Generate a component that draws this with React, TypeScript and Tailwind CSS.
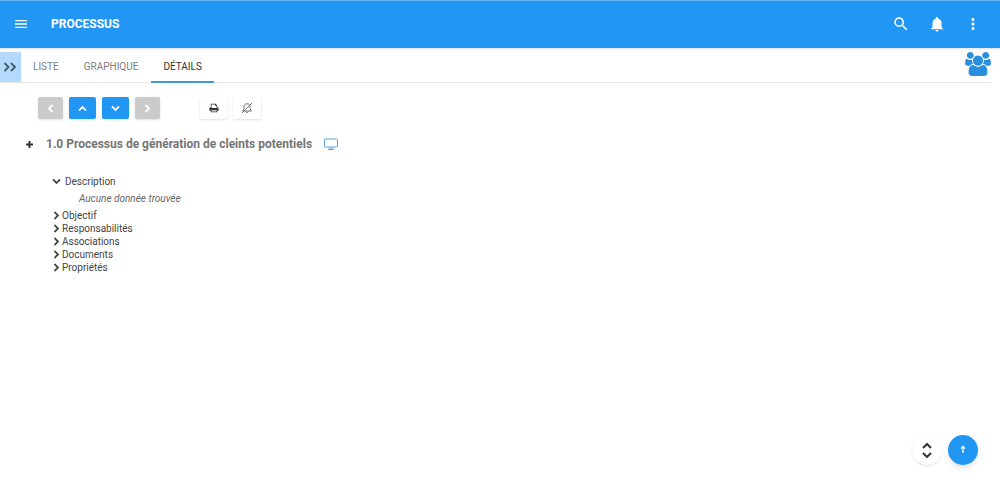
import { useState, type ReactNode } from 'react'
import { MdMenu, MdMoreVert, MdNotifications, MdSearch } from 'react-icons/md'

const tabs = ['LISTE', 'GRAPHIQUE', 'DÉTAILS']

const sections = ['Objectif', 'Responsabilités', 'Associations', 'Documents', 'Propriétés']

function Chevron({ className }: { className?: string }) {
  return (
    <svg viewBox="0 0 1792 1792" fill="currentColor" className={className} aria-hidden="true">
      <path d="M1395 941l-742 742q-19 19-45 19t-45-19l-166-166q-19-19-19-45t19-45l531-531-531-531q-19-19-19-45t19-45l166-166q19-19 45-19t45 19l742 742q19 19 19 45t-19 45z" />
    </svg>
  )
}

function UsersIcon() {
  return (
    <svg viewBox="0 0 1920 1792" fill="currentColor" className="h-6 w-[26px]" aria-hidden="true">
      <path d="M593 896q-162 5-265 128h-134q-82 0-138-40.5t-56-118.5q0-353 124-353 6 0 43.5 21t97.5 42.5 119 21.5q67 0 133-23-5 37-5 66 0 139 81 256zm1071 637q0 120-73 189.5t-194 69.5h-874q-121 0-194-69.5t-73-189.5q0-53 3.5-103.5t14-109 26.5-108.5 43-97.5 62-81 85.5-53.5 111.5-20q10 0 43 21.5t73 48 107 48 135 21.5 135-21.5 107-48 73-48 43-21.5q61 0 111.5 20t85.5 53.5 62 81 43 97.5 26.5 108.5 14 109 3.5 103.5zm-1024-1277q0 106-75 181t-181 75-181-75-75-181 75-181 181-75 181 75 75 181zm704 384q0 159-112.5 271.5t-271.5 112.5-271.5-112.5-112.5-271.5 112.5-271.5 271.5-112.5 271.5 112.5 112.5 271.5zm576 225q0 78-56 118.5t-138 40.5h-134q-103-123-265-128 81-117 81-256 0-29-5-66 66 23 133 23 59 0 119-21.5t97.5-42.5 43.5-21q124 0 124 353zm-128-609q0 106-75 181t-181 75-181-75-75-181 75-181 181-75 181 75 75 181z" />
    </svg>
  )
}

function PrintIcon() {
  return (
    <svg viewBox="0 0 1792 1792" fill="currentColor" className="size-[10px]" aria-hidden="true">
      <path d="M448 1536h896v-256h-896v256zm0-640h896v-384h-160q-40 0-68-28t-28-68v-160h-640v640zm1152 64q0-26-19-45t-45-19-45 19-19 45 19 45 45 19 45-19 19-45zm128 0v416q0 13-9.5 22.5t-22.5 9.5h-224v160q0 40-28 68t-68 28h-960q-40 0-68-28t-28-68v-160h-224q-13 0-22.5-9.5t-9.5-22.5v-416q0-79 56.5-135.5t135.5-56.5h64v-544q0-40 28-68t68-28h672q40 0 88 20t76 48l152 152q28 28 48 76t20 88v256h64q79 0 135.5 56.5t56.5 135.5z" />
    </svg>
  )
}

function BellOffIcon() {
  return (
    <svg viewBox="0 0 24 24" fill="none" stroke="currentColor" strokeWidth="1.6" className="size-3" aria-hidden="true">
      <path d="M3 18h18c-2-2-3-4-3-8 0-4-2-6.500-6-6.500S6 6 6 10c0 4-1 6-3 8zM10 19c.5 3 4 3 4.500 0M2 22L22 2" />
    </svg>
  )
}

function MonitorIcon() {
  return (
    <svg viewBox="0 0 14 12" fill="none" stroke="currentColor" className="h-3 w-[14px]" aria-hidden="true">
      <rect x=".5" y="1" width="13" height="8" rx="1" />
      <path d="M6 9v2M8 9v2M4 11.500h6" />
    </svg>
  )
}

function NavButton({ label, disabled, children }: { label: string; disabled?: boolean; children: ReactNode }) {
  return (
    <button
      aria-label={label}
      disabled={disabled}
      className="flex h-[22px] w-[27px] items-center justify-center rounded-xs bg-[#2196f3] text-white shadow disabled:w-[25px] disabled:bg-[#cbcbcb]"
    >
      {children}
    </button>
  )
}

export default function App() {
  const [active, setActive] = useState('DÉTAILS')
  const [open, setOpen] = useState(['Description'])

  function toggle(name: string) {
    setOpen(open.includes(name) ? open.filter((n) => n !== name) : [...open, name])
  }

  return (
    <div className="min-h-screen bg-white font-[Roboto,sans-serif] text-[#333]">
      <header className="flex h-12 items-center border-t border-[#64b5f6] bg-[#2196f3] pr-[18px] pb-0.5 pl-[13px] text-white shadow-sm">
        <button aria-label="Menu">
          <MdMenu className="size-4" />
        </button>
        <h1 className="ml-[22px] text-xs font-bold">PROCESSUS</h1>
        <div className="ml-auto flex items-center gap-[18px]">
          <button aria-label="Rechercher">
            <MdSearch className="size-[18px]" />
          </button>
          <button aria-label="Notifications">
            <MdNotifications className="size-[18px]" />
          </button>
          <button aria-label="Plus d'options">
            <MdMoreVert className="size-[18px]" />
          </button>
        </div>
      </header>

      <div className="mt-1 mr-[9px] flex h-[31px] border-b border-[#e4e4e4]">
        <button
          aria-label="Ouvrir le panneau"
          className="flex w-[21px] items-center justify-center bg-[#b3dafa] text-[#455a64]"
        >
          <svg viewBox="0 0 14 10" fill="none" stroke="currentColor" strokeWidth="1.8" className="h-[10px] w-[14px]">
            <path d="M.5 1l4 4-4 4M7 1l4 4-4 4" />
          </svg>
        </button>
        <nav className="flex gap-px">
          {tabs.map((tab) => (
            <button
              key={tab}
              onClick={() => setActive(tab)}
              className={
                tab === active
                  ? '-mb-px border-b-2 border-[#3d9bd0] px-3 text-[10px] text-[#333]'
                  : '-mb-px border-b-2 border-transparent px-3 text-[10px] text-[#808080]'
              }
            >
              {tab}
            </button>
          ))}
        </nav>
        <button aria-label="Utilisateurs" className="ml-auto self-start text-[#2b8fe0]">
          <UsersIcon />
        </button>
      </div>

      <main>
        <div className="mt-[14px] ml-[38px] flex gap-[6px]">
          <NavButton label="Précédent" disabled>
            <Chevron className="size-[9px] rotate-180" />
          </NavButton>
          <NavButton label="Monter">
            <Chevron className="size-[9px] -rotate-90" />
          </NavButton>
          <NavButton label="Descendre">
            <Chevron className="size-[9px] rotate-90" />
          </NavButton>
          <NavButton label="Suivant" disabled>
            <Chevron className="size-[9px]" />
          </NavButton>
          <button
            aria-label="Imprimer"
            className="ml-[34px] flex h-[22px] w-[27px] items-center justify-center rounded-xs bg-white shadow"
          >
            <PrintIcon />
          </button>
          <button
            aria-label="Désactiver les notifications"
            className="flex h-[22px] w-[28px] items-center justify-center rounded-xs bg-white text-[#555] shadow"
          >
            <BellOffIcon />
          </button>
        </div>

        <div className="mt-4 ml-[25px] flex items-center">
          <button aria-label="Ajouter">
            <svg viewBox="0 0 9 9" fill="none" stroke="currentColor" strokeWidth="2" className="size-[9px]">
              <path d="M4.500 1v7M1 4.500h7" />
            </svg>
          </button>
          <h2 className="ml-3 text-xs leading-[18px] font-bold text-[#757575]">
            1.0 Processus de génération de cleints potentiels
          </h2>
          <button aria-label="Afficher" className="ml-3 text-[#5ba3e0]">
            <MonitorIcon />
          </button>
        </div>

        <div className="mt-[22px] ml-[52px] text-[10px] leading-[13px] text-[#444]">
          <button onClick={() => toggle('Description')} className="flex items-center gap-1">
            <Chevron className={open.includes('Description') ? 'size-[9px] rotate-90' : 'size-[9px]'} />
            Description
          </button>
          {open.includes('Description') && (
            <p className="my-1 ml-[27px] text-[#666] italic">Aucune donnée trouvée</p>
          )}
          {sections.map((name) => (
            <button key={name} onClick={() => toggle(name)} className="flex items-center gap-px">
              <Chevron className={open.includes(name) ? 'size-[9px] rotate-90' : 'size-[9px]'} />
              {name}
            </button>
          ))}
        </div>
      </main>

      <div className="fixed right-[22px] bottom-5 flex gap-[6px]">
        <button
          aria-label="Tout développer"
          className="flex size-[30px] items-center justify-center rounded-full bg-white shadow"
        >
          <svg viewBox="0 0 10 16" fill="none" stroke="currentColor" strokeWidth="2" className="h-4 w-[10px]">
            <path d="M1 6l4-4 4 4M1 11l4 4 4-4" />
          </svg>
        </button>
        <button
          aria-label="Haut de page"
          className="flex size-[30px] items-center justify-center rounded-full bg-[#2196f3] text-white shadow-md"
        >
          <svg viewBox="0 0 8 10" fill="none" stroke="currentColor" strokeWidth="1.300" className="h-[10px] w-2">
            <path d="M4 8V1.500M2 3.500l2-2 2 2" />
          </svg>
        </button>
      </div>
    </div>
  )
}
